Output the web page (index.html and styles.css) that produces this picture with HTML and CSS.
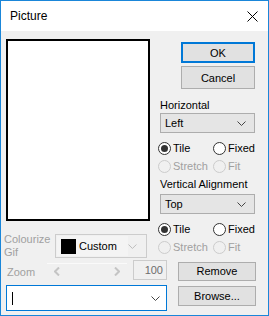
FILE: index.html
```html
<!DOCTYPE html>
<html lang="en">
<head>
  <meta charset="UTF-8" />
  <title>Picture</title>
  <link rel="stylesheet" href="styles.css">
</head>
<body>
  <div class="window">
    <div class="titlebar">
      <span class="title">Picture</span>
      <svg class="close" width="11" height="11" viewBox="0 0 11 11">
        <path d="M0.5 0.5 L10.5 10.5 M10.5 0.5 L0.5 10.5" stroke="#000" stroke-width="1" fill="none"/>
      </svg>
    </div>

    <div class="content">
      <div class="top">
        <div class="left">
          <div class="picture"></div>
          <div class="colour-row">
            <span class="colour-label disabled">Colourize<br>Gif</span>
            <div class="combo combo-disabled">
              <div class="combo-value">
                <span class="swatch"></span>
                <span>Custom</span>
              </div>
              <svg class="chev" width="9" height="5" viewBox="0 0 9 5"><path d="M0.5 0.5 L4.5 4.5 L8.5 0.5" stroke="#bcbcbc" fill="none"/></svg>
            </div>
          </div>
        </div>

        <div class="right">
          <button class="btn btn-default">OK</button>
          <button class="btn btn-cancel">Cancel</button>

          <div class="group-label">Horizontal</div>
          <div class="select">
            <span>Left</span>
            <svg class="chev" width="9" height="5" viewBox="0 0 9 5"><path d="M0.5 0.5 L4.5 4.5 L8.5 0.5" stroke="#444" fill="none"/></svg>
          </div>
          <div class="radio-row first">
            <label class="radio-item"><span class="radio checked"></span>Tile</label>
            <label class="radio-item"><span class="radio"></span>Fixed</label>
          </div>
          <div class="radio-row">
            <label class="radio-item disabled"><span class="radio"></span>Stretch</label>
            <label class="radio-item disabled"><span class="radio"></span>Fit</label>
          </div>

          <div class="group-label second">Vertical Alignment</div>
          <div class="select select-top">
            <span>Top</span>
            <svg class="chev" width="9" height="5" viewBox="0 0 9 5"><path d="M0.5 0.5 L4.5 4.5 L8.5 0.5" stroke="#444" fill="none"/></svg>
          </div>
          <div class="radio-row first">
            <label class="radio-item"><span class="radio checked"></span>Tile</label>
            <label class="radio-item"><span class="radio"></span>Fixed</label>
          </div>
          <div class="radio-row">
            <label class="radio-item disabled"><span class="radio"></span>Stretch</label>
            <label class="radio-item disabled"><span class="radio"></span>Fit</label>
          </div>
        </div>
      </div>

      <div class="row zoom-row">
        <div class="row-left">
          <span class="zoom-label disabled">Zoom</span>
          <div class="slider">
            <svg width="6" height="9" viewBox="0 0 6 9"><path d="M5 0.5 L1 4.5 L5 8.5" stroke="#c4c4c4" stroke-width="2" fill="none"/></svg>
            <svg width="6" height="9" viewBox="0 0 6 9"><path d="M1 0.5 L5 4.5 L1 8.5" stroke="#c4c4c4" stroke-width="2" fill="none"/></svg>
          </div>
          <div class="zoom-box">100</div>
        </div>
        <button class="btn btn-side">Remove</button>
      </div>

      <div class="row path-row">
        <div class="path-combo">
          <span class="caret"></span>
          <svg class="chev" width="9" height="5" viewBox="0 0 9 5"><path d="M0.5 0.5 L4.5 4.5 L8.5 0.5" stroke="#444" fill="none"/></svg>
        </div>
        <button class="btn btn-side btn-browse">Browse...</button>
      </div>
    </div>
  </div>
</body>
</html>
```

FILE: styles.css
```css
body {
  margin: 0;
  font-family: "Liberation Sans", Arial, sans-serif;
  font-size: 11px;
  color: #000;
}
.window {
  width: 269px;
  height: 316px;
  box-sizing: border-box;
  border: 1px solid #1a86d9;
  background-color: #f0f0f0;
}
.titlebar {
  height: 30px;
  background-color: #fff;
  display: flex;
  align-items: center;
  justify-content: space-between;
  padding: 0 10px 0 9px;
}
.title {
  font-size: 12px;
}
.content {
  padding-top: 8px;
}
.top {
  display: flex;
  padding-left: 3px;
  height: 218px;
}
.left {
  width: 146px;
  flex: none;
}
.picture {
  margin-left: 2px;
  width: 144px;
  height: 182px;
  box-sizing: border-box;
  border: 2px solid #000;
  background-color: #fff;
}
.colour-row {
  display: flex;
  align-items: center;
  margin-top: 12px;
}
.colour-label {
  width: 51px;
  line-height: 13px;
}
.disabled {
  color: #a0a0a0;
}
.combo {
  width: 92px;
  height: 24px;
  box-sizing: border-box;
  border: 1px solid #cccccc;
  display: flex;
  align-items: center;
  justify-content: space-between;
  padding: 0 9px 0 1px;
}
.combo-value {
  display: flex;
  align-items: center;
  gap: 3px;
  width: 68px;
  height: 20px;
  padding-left: 4px;
  background-color: #f4f4f4;
}
.swatch {
  width: 15px;
  height: 15px;
  background-color: #000;
}
.right {
  margin-left: 8px;
  width: 101px;
  flex: none;
  display: flex;
  flex-direction: column;
}
.btn {
  font-family: inherit;
  font-size: 11px;
  background-color: #e1e1e1;
  border: 1px solid #adadad;
  padding: 0;
  color: #000;
}
.btn-default {
  margin: 3px 0 0 23px;
  width: 74px;
  height: 21px;
  border: 2px solid #0078d7;
}
.btn-cancel {
  margin: 3px 0 0 23px;
  width: 74px;
  height: 23px;
}
.group-label {
  margin: 9px 0 0 2px;
  height: 14px;
  line-height: 14px;
}
.group-label.second {
  margin-top: 4px;
}
.select {
  margin: 1px 0 0 2px;
  width: 95px;
  height: 20px;
  box-sizing: border-box;
  border: 1px solid #adadad;
  background-color: #e5e5e5;
  display: flex;
  align-items: center;
  justify-content: space-between;
  padding: 0 8px 0 4px;
}
.select-top {
  margin-top: 3px;
}
.radio-row {
  display: flex;
  height: 14px;
  margin-top: 4px;
}
.radio-row.first {
  margin-top: 8px;
}
.radio-item {
  display: flex;
  align-items: center;
  gap: 2px;
  flex: none;
}
.radio-item:first-child {
  width: 55px;
}
.radio {
  width: 13px;
  height: 13px;
  flex: none;
  box-sizing: border-box;
  border: 1px solid #333;
  border-radius: 50%;
  background-color: #fff;
  display: flex;
  align-items: center;
  justify-content: center;
}
.radio.checked::after {
  content: "";
  width: 7px;
  height: 7px;
  border-radius: 50%;
  background-color: #333;
}
.radio-item.disabled .radio {
  border-color: #cccccc;
  background-color: #f0f0f0;
}
.row {
  display: flex;
  align-items: center;
  padding-left: 5px;
}
.zoom-row {
  margin-top: 3px;
  height: 20px;
}
.row-left {
  width: 161px;
  flex: none;
  display: flex;
  align-items: center;
}
.zoom-label {
  width: 40px;
  padding-left: 1px;
  margin-top: 3px;
}
.slider {
  width: 81px;
  height: 17px;
  margin-top: 2px;
  box-sizing: border-box;
  border-top: 1px solid #fafafa;
  display: flex;
  align-items: center;
  justify-content: space-between;
  padding: 0 7px;
}
.zoom-box {
  margin-left: 6px;
  width: 34px;
  height: 20px;
  box-sizing: border-box;
  border: 1px solid #cccccc;
  color: #6d6d6d;
  display: flex;
  align-items: center;
  justify-content: flex-end;
  padding-right: 3px;
}
.btn-side {
  margin-left: 11px;
  width: 78px;
  height: 19px;
  margin-top: 2px;
}
.path-row {
  margin-top: 5px;
  align-items: flex-start;
}
.path-combo {
  width: 161px;
  height: 26px;
  flex: none;
  box-sizing: border-box;
  border: 1px solid #0078d7;
  background-color: #fff;
  display: flex;
  align-items: center;
  justify-content: space-between;
  padding: 0 6px 0 5px;
}
.caret {
  width: 1px;
  height: 13px;
  background-color: #000;
}
.btn-browse {
  margin-top: 1px;
  height: 20px;
}
```
